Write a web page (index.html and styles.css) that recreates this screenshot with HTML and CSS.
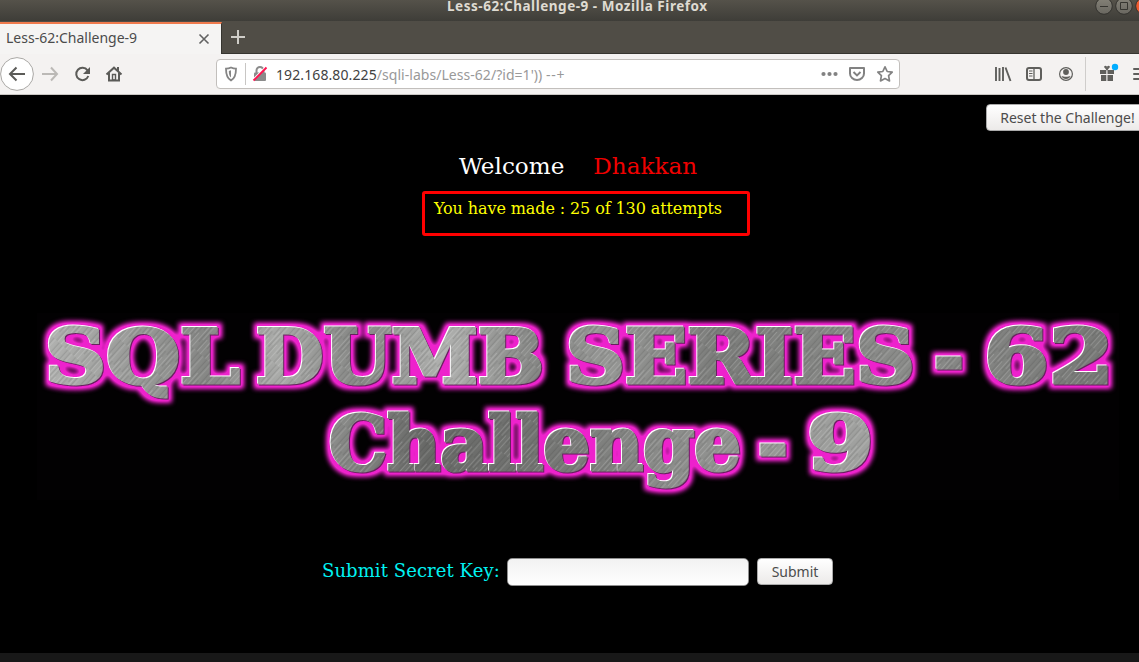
FILE: index.html
```html
<!DOCTYPE html>
<html lang="en">
<head>
<meta charset="utf-8">
<title>Less-62:Challenge-9</title>
<link rel="stylesheet" href="styles.css">
</head>
<body>
<div class="window">
  <header class="titlebar">
    <span class="window-title">Less-62:Challenge-9 - Mozilla Firefox</span>
    <svg class="window-controls" width="47" height="21" viewBox="0 0 47 21">
      <defs><linearGradient id="knob" x2="0" y2="1"><stop offset="0" stop-color="#858278"/><stop offset="1" stop-color="#696760"/></linearGradient></defs>
      <g fill="url(#knob)" stroke="#33322e"><circle cx="12" cy="6" r="8.3"/><circle cx="32" cy="6" r="8.3"/><circle cx="52" cy="6" r="8.3" fill="#ee5b2f"/></g>
      <path d="M8 6.500h8M28.500 2.500h7v7h-7z" fill="none" stroke="#363530"/>
    </svg>
  </header>
  <div class="tabstrip">
    <div class="tab"><span class="tab-title">Less-62:Challenge-9</span>
      <svg class="close" width="12" height="12" viewBox="0 0 12 12"><path d="M1.500 1.500l9 9m0-9l-9 9" stroke="#626262" stroke-width="1.600"/></svg>
    </div>
    <svg class="new-tab" width="16" height="16" viewBox="0 0 16 16"><path d="M8 1v14M1 8h14" stroke="#cfcdc8" stroke-width="2"/></svg>
  </div>
  <nav class="toolbar">
    <svg class="nav-icons" width="130" height="40" viewBox="0 0 130 40" fill="none" stroke="#5b5b58" stroke-width="2">
      <circle cx="17" cy="20" r="16.400" fill="#fff" stroke="#aaa8a5" stroke-width="1"/>
      <path d="M25 20H10m6.500-6.500L10 20l6.500 6.500"/>
      <path d="M42 20h15m-6-6.500L57 20l-6 6.500" stroke="#bbb9b6"/>
      <path d="M87.500 16.300A6.200 6.200 0 1 0 88.300 22"/><path d="M90 13v7h-7z" fill="#5b5b58" stroke="none"/>
      <path d="M106.500 20.500l7.500-6.800 7.500 6.800M109 19v7.500h10V19M118 13v4"/><path d="M112.500 20.500h3V26h-3z" stroke-width="1.400"/>
    </svg>
    <div class="urlbar">
      <svg class="site-icons" width="58" height="28" viewBox="0 0 58 28">
        <path d="M9 8.700c2.500 0 3.800-.6 5-1.200 1.200.6 2.500 1.200 5 1.200 0 6-1 9.500-5 11.700-4-2.200-5-5.700-5-11.700z" fill="none" stroke="#858585" stroke-width="1.800"/>
        <path d="M14 10.300v7.300c-1.600-1.300-2.100-3-2.200-6.500z" fill="#858585"/>
        <path d="M28.500 3v22" stroke="#c8c6c4"/>
        <rect x="37" y="12.500" width="12" height="8.500" rx="1" fill="#8b8b8b"/><path d="M39.500 13v-2.500a3.500 3.500 0 0 1 7 0V13" fill="none" stroke="#8b8b8b" stroke-width="2"/>
        <path d="M36 20L49 7" stroke="#fff" stroke-width="2"/><path d="M36.500 20.500L49.500 7.500" stroke="#ff1450" stroke-width="1.900"/>
      </svg>
      <span class="url"><b>192.168.80.225</b>/sqli-labs/Less-62/?id=1')) <i>--+</i></span>
      <svg class="page-actions" width="79" height="28" viewBox="0 0 79 28" fill="none" stroke="#828282" stroke-width="2">
        <g fill="#828282" stroke="none"><circle cx="3.500" cy="14" r="2.100"/><circle cx="9.500" cy="14" r="2.100"/><circle cx="15.500" cy="14" r="2.100"/></g>
        <path d="M30 8h14v5.500a7 6.500 0 0 1-14 0z" stroke-linejoin="round"/><path d="M33.500 12l3.500 3.400 3.500-3.400"/>
        <path d="M65 6.800l2.200 4.700 5 .7-3.600 3.500.9 5.200-4.500-2.400-4.500 2.400.9-5.200-3.600-3.500 5-.7z" stroke-width="1.700" stroke-linejoin="round"/>
      </svg>
    </div>
    <svg class="tool-icons" width="150" height="40" viewBox="0 0 150 40" fill="none" stroke="#5f5f5c" stroke-width="2">
      <path d="M7 13v14M10.500 14v13M14 13v14M16.500 13.500l5 13.500" stroke-width="1.900"/>
      <rect x="38" y="14" width="14" height="12" rx="2"/><path d="M45 14v12" stroke-width="1.300"/><path d="M40 17h3.500M40 19.500h3.500M40 22h3.500" stroke-width="1"/>
      <circle cx="77" cy="20" r="6.400" stroke-width="1.200"/><circle cx="77" cy="18" r="2.900" fill="#5f5f5c" stroke="none"/><path d="M72.500 22c2 1 7 1 9 0-1 4-8 4-9 0z" fill="#5f5f5c" stroke="none"/>
      <path d="M96.500 3v34" stroke="#cfcdcb" stroke-width="1"/>
      <g fill="#5f5f5c" stroke="none"><path d="M111 16h6.300v4H111zM118.500 16h6.500v4h-6.500zM112 21h5.300v6H112zM118.500 21h5.500v6h-5.500z"/></g><path d="M118 16c-1-2-3-3-2-3.500s2 1 2 2c0-1 1-2.500 2-2s-1 1.500-2 3.500" stroke-width="1.200"/>
      <circle cx="126" cy="13" r="3.200" fill="#00adff" stroke="none"/>
      <path d="M145 15h14M145 20h14M145 25h14" stroke-linecap="round"/>
    </svg>
  </nav>
  <main class="page">
    <div class="reset-row"><button class="button reset">Reset the Challenge!</button></div>
    <div class="welcome"><span>Welcome</span><span class="user">Dhakkan</span></div>
    <div class="attempts">You have made : 25 of 130 attempts</div>
    <svg class="banner" width="1139" height="200" viewBox="0 305 1139 200">
      <defs>
        <linearGradient id="metal-top" gradientUnits="userSpaceOnUse" x1="50" y1="350" x2="1080" y2="290">
          <stop offset="0" stop-color="#b0b1af"/><stop offset=".15" stop-color="#868785"/><stop offset=".22" stop-color="#aaaba9"/><stop offset=".3" stop-color="#858684"/><stop offset=".38" stop-color="#b0b1af"/><stop offset=".47" stop-color="#868785"/><stop offset=".54" stop-color="#969795"/><stop offset=".65" stop-color="#7b7c7a"/><stop offset=".82" stop-color="#8b8c8a"/><stop offset="1" stop-color="#797a78"/>
        </linearGradient>
        <linearGradient id="metal-bottom" gradientUnits="userSpaceOnUse" x1="330" y1="430" x2="870" y2="460">
          <stop offset="0" stop-color="#8c8d8b"/><stop offset=".18" stop-color="#686967"/><stop offset=".4" stop-color="#747573"/><stop offset=".62" stop-color="#8b8c8a"/><stop offset="1" stop-color="#a2a3a1"/>
        </linearGradient>
        <pattern id="brush" width="43" height="11" patternUnits="userSpaceOnUse" patternTransform="rotate(-48)">
          <path d="M0 .5h27M12 4.200h31M0 7.500h15" stroke="#fff" stroke-opacity=".28" stroke-width=".6"/><path d="M8 2.300h35M0 6h22M20 9.300h23" stroke="#222" stroke-opacity=".24" stroke-width=".7"/>
        </pattern>
        <filter id="neon" filterUnits="userSpaceOnUse" x="0" y="300" width="1139" height="210" color-interpolation-filters="sRGB">
          <feMorphology in="SourceAlpha" operator="dilate" radius="4" result="wide"/>
          <feGaussianBlur in="wide" stdDeviation="2.400" result="soft"/>
          <feComponentTransfer in="soft" result="strong"><feFuncA type="linear" slope="1.350"/></feComponentTransfer>
          <feFlood flood-color="#ed22cc"/><feComposite in2="strong" operator="in" result="glow"/>
          <feOffset in="SourceAlpha" dx="-.7" dy="-.7" result="up"/>
          <feFlood flood-color="#fff"/><feComposite in2="up" operator="in" result="light"/>
          <feOffset in="SourceAlpha" dx=".7" dy=".7" result="down"/>
          <feFlood flood-color="#69205f"/><feComposite in2="down" operator="in" result="dark"/>
          <feMerge><feMergeNode in="glow"/><feMergeNode in="dark"/><feMergeNode in="light"/><feMergeNode in="SourceGraphic"/></feMerge>
        </filter>
        <mask id="letters" maskUnits="userSpaceOnUse" x="0" y="300" width="1139" height="210">
          <g class="banner-text" fill="#fff" stroke="#fff">
            <text x="45" y="382.500" textLength="195" lengthAdjust="spacingAndGlyphs">SQL</text>
            <text x="256" y="382.500" textLength="288" lengthAdjust="spacingAndGlyphs">DUMB</text>
            <text x="566" y="382.500" textLength="349" lengthAdjust="spacingAndGlyphs">SERIES</text>
            <text x="934" y="382.500" textLength="30" lengthAdjust="spacingAndGlyphs">-</text>
            <text x="984" y="382.500" textLength="130" lengthAdjust="spacingAndGlyphs">62</text>
            <text x="329" y="469.500" textLength="412" lengthAdjust="spacingAndGlyphs">Challenge</text>
            <text x="758" y="469.500" textLength="30" lengthAdjust="spacingAndGlyphs">-</text>
            <text x="807" y="469.500" textLength="67" lengthAdjust="spacingAndGlyphs">9</text>
          </g>
        </mask>
      </defs>
      <rect x="37" y="313" width="1082" height="187" fill="#020102"/>
      <g filter="url(#neon)"><g mask="url(#letters)">
        <rect y="300" width="1139" height="104" fill="url(#metal-top)"/><rect y="404" width="1139" height="106" fill="url(#metal-bottom)"/><rect y="300" width="1139" height="210" fill="url(#brush)"/>
      </g></g>
    </svg>
    <form class="key-form"><label for="key">Submit Secret Key:</label><input id="key" type="text"><button class="button submit" type="button">Submit</button></form>
  </main>
  <footer class="bottom-edge"></footer>
</div>
</body>
</html>
```
FILE: styles.css
```css
* { box-sizing: border-box; }
body { margin: 0; background: #000; overflow: hidden; font-family: "Noto Sans", sans-serif; }
svg { display: block; flex: none; }
.window { width: 1139px; height: 662px; display: flex; flex-direction: column; overflow: hidden; }
.titlebar { height: 21px; flex: none; display: flex; justify-content: space-between; background: linear-gradient(#55524a, #3e3d38); }
.window-title { margin-left: 447px; color: #dfdbd2; font-weight: 700; font-size: 13.500px; letter-spacing: .53px; line-height: 12px; white-space: nowrap; }
.tabstrip { height: 33px; flex: none; display: flex; background: #504d46; border-bottom: 1px solid #363530; }
.tab { width: 222px; height: 32px; display: flex; justify-content: space-between; padding: 4px 11px 0 6px; background: #f5f4f3; border-top: 2px solid #ef7a4d; border-right: 1px solid #363530; margin-top: 1px; }
.tab-title { font-size: 14px; line-height: 20px; color: #4b4b4b; white-space: nowrap; }
.close { margin-top: 5px; }
.new-tab { margin: 8px 0 0 8px; }
.toolbar { height: 41px; flex: none; display: flex; background: #f4f2f1; border-bottom: 1px solid #c9c6c3; }
.urlbar { width: 684px; height: 30px; margin: 5px 0 0 86px; border: 1px solid #c2bfbc; border-radius: 4px; display: flex; background: #fff; flex: none; }
.url { flex: 1; color: #999; font-size: 14px; line-height: 29px; white-space: nowrap; padding-left: 1px; letter-spacing: .04px; }
.url b { color: #414141; font-weight: 400; letter-spacing: .1px; }
.url i { font-style: normal; letter-spacing: .8px; }
.tool-icons { margin-left: 89px; }
.page { flex: 1; min-height: 0; display: flex; flex-direction: column; background: #000; font-family: "DejaVu Serif", serif; }
.reset-row { height: 36px; display: flex; justify-content: flex-end; padding-top: 9px; flex: none; }
.button { border: 1px solid #aaa; border-radius: 4px; padding: 0; background: linear-gradient(#fff, #eceae9); color: #4c4c4c; font-family: "Noto Sans", sans-serif; font-size: 14px; line-height: 23px; white-space: nowrap; flex: none; }
.reset { width: 163px; height: 27px; margin-right: -10px; }
.welcome { display: flex; gap: 29px; margin: 15px 0 5px 459px; height: 40px; line-height: 40px; color: #fff; font-size: 23.100px; flex: none; }
.user { color: #f00000; }
.attempts { width: 328px; height: 45px; margin: 0 0 0 422px; padding: 5px 9px; border: 3px solid #f00; border-radius: 3px; color: #ff0; font-size: 16px; letter-spacing: -.1px; line-height: 19px; white-space: nowrap; flex: none; }
.banner { margin-top: 69px; }
.banner-text { font-family: "DejaVu Serif", serif; font-weight: 700; font-size: 75px; stroke-width: 3px; }
.key-form { display: flex; align-items: center; margin: 52px 0 0 322px; height: 30px; flex: none; }
.key-form label { width: 185px; margin-top: -2px; color: #00f2f2; font-size: 18px; letter-spacing: .08px; line-height: 26px; white-space: nowrap; }
.key-form input { width: 242px; height: 28px; border: 1px solid #8f8f8f; border-radius: 5px; background: linear-gradient(#f2f2f2, #fff); margin: 0 8px 0 0; }
.submit { width: 76px; height: 27px; margin-top: -1px; }
.bottom-edge { height: 9px; flex: none; background: #181818; }
```
